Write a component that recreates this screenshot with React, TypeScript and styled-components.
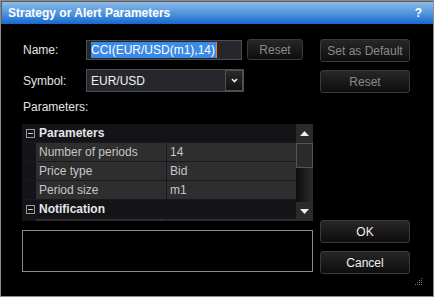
import styled, { createGlobalStyle } from "styled-components";

const GlobalStyle = createGlobalStyle`
  html, body {
    margin: 0;
    padding: 0;
    background: #000;
  }
  body {
    font-family: "Liberation Sans", Arial, sans-serif;
    font-size: 12px;
  }
`;

const Window = styled.div`
  position: relative;
  width: 434px;
  height: 297px;
  box-sizing: border-box;
  border: 1px solid #8c8c8c;
  background: #000;
  display: flex;
  flex-direction: column;
`;

const TitleBar = styled.div`
  height: 23px;
  box-sizing: border-box;
  border-top: 1px solid #5a5a5a;
  border-left: 1px solid #5a5a5a;
  background: linear-gradient(#8dbce9, #4c92dc 55%, #1468cf);
  display: flex;
  align-items: center;
  justify-content: space-between;
  padding: 0 11px 0 6px;
  color: #fff;
  font-weight: bold;
  font-size: 12px;
`;

const Body = styled.div`
  flex: 1;
  display: flex;
  gap: 7px;
  padding: 15px 22px 22px 21px;
`;

const LeftColumn = styled.div`
  width: 291px;
  display: flex;
  flex-direction: column;
`;

const RightColumn = styled.div`
  width: 90px;
  display: flex;
  flex-direction: column;
  gap: 8px;
`;

const Spacer = styled.div`
  flex: 1;
`;

const FieldRow = styled.div<{ $top: number; $height: number }>`
  display: flex;
  align-items: center;
  height: ${(p) => p.$height}px;
  margin-top: ${(p) => p.$top}px;
`;

const Label = styled.div`
  width: 64px;
  box-sizing: border-box;
  padding-left: 1px;
  color: #e4e4e4;
  line-height: 14px;
`;

const TextInput = styled.div`
  width: 156px;
  height: 20px;
  box-sizing: border-box;
  border: 1px solid #4c4d52;
  background: #26272c;
  display: flex;
  align-items: center;
  padding-left: 4px;
`;

const Selected = styled.span`
  background: #3a8ae6;
  color: #fff;
  line-height: 16px;
  padding-right: 1px;
  border-right: 1px solid #f08020;
`;

const Select = styled.div`
  width: 158px;
  height: 23px;
  box-sizing: border-box;
  border: 1px solid #4c4d52;
  background: #26272c;
  display: flex;
  align-items: center;
  color: #f2f2f2;
`;

const SelectValue = styled.div`
  flex: 1;
  padding-left: 4px;
`;

const DropButton = styled.div`
  width: 18px;
  height: 21px;
  box-sizing: border-box;
  border: 1px solid #505050;
  background: linear-gradient(#2a2a2a, #111);
  display: flex;
  align-items: center;
  justify-content: center;
`;

const Button = styled.div<{ $dim?: boolean; $width?: number; $height?: number }>`
  width: ${(p) => (p.$width ? `${p.$width}px` : "100%")};
  height: ${(p) => p.$height ?? 23}px;
  box-sizing: border-box;
  border: 1px solid #3a3a3a;
  border-radius: 3px;
  background: linear-gradient(#272727, #0d0d0d);
  color: ${(p) => (p.$dim ? "#8a8a8a" : "#f2f2f2")};
  display: flex;
  align-items: center;
  justify-content: center;
  flex-shrink: 0;
`;

const SmallButton = styled(Button)`
  margin-left: 5px;
`;

const SectionLabel = styled.div`
  margin-top: 8px;
  padding-left: 1px;
  line-height: 14px;
  color: #e4e4e4;
`;

const Grid = styled.div`
  margin-top: 10px;
  height: 97px;
  display: flex;
  overflow: hidden;
  background: #131318;
`;

const GridRows = styled.div`
  flex: 1;
  display: flex;
  flex-direction: column;
`;

const Row = styled.div<{ $header?: boolean }>`
  height: 19px;
  flex-shrink: 0;
  box-sizing: border-box;
  border-bottom: 1px solid #1a1a1c;
  display: flex;
  background: #131318;
  color: ${(p) => (p.$header ? "#e6e6e6" : "#c6c6c6")};
  font-weight: ${(p) => (p.$header ? "bold" : "normal")};
`;

const Gutter = styled.div`
  width: 14px;
  flex-shrink: 0;
  display: flex;
  align-items: center;
  justify-content: center;
`;

const Toggle = styled.div`
  width: 9px;
  height: 9px;
  box-sizing: border-box;
  border: 1px solid #9a9a9a;
  position: relative;
  margin-left: 3px;
  &::after {
    content: "";
    position: absolute;
    left: 1px;
    right: 1px;
    top: 3px;
    height: 1px;
    background: #d0d0d0;
  }
`;

const HeaderText = styled.div`
  padding-left: 3px;
  line-height: 18px;
`;

const NameCell = styled.div`
  width: 131px;
  box-sizing: border-box;
  border-right: 1px solid #1a1a1c;
  background: #2e2e2f;
  padding-left: 3px;
  line-height: 18px;
`;

const ValueCell = styled.div`
  flex: 1;
  background: #2e2e2f;
  padding-left: 3px;
  line-height: 18px;
`;

const ScrollBar = styled.div`
  width: 17px;
  display: flex;
  flex-direction: column;
  background: #1e1e1e;
`;

const ScrollArrow = styled.div`
  height: 19px;
  flex-shrink: 0;
  background: #2a2a2b;
  display: flex;
  align-items: center;
  justify-content: center;
`;

const Thumb = styled.div`
  height: 25px;
  flex-shrink: 0;
  box-sizing: border-box;
  border: 1px solid #555;
  background: #2b2b2c;
`;

const Track = styled.div`
  flex: 1;
  background: linear-gradient(90deg, #0c0c0c, #2c2c2c);
`;

const DescriptionBox = styled.div`
  margin-top: 9px;
  height: 42px;
  box-sizing: border-box;
  border: 1px solid #8a8a8a;
  background: #000;
`;

const Grip = styled.svg`
  position: absolute;
  right: 11px;
  bottom: 11px;
`;

type Prop = { name: string; value: string };

const parameters: Prop[] = [
  { name: "Number of periods", value: "14" },
  { name: "Price type", value: "Bid" },
  { name: "Period size", value: "m1" },
];

const GroupHeader = ({ title }: { title: string }) => (
  <Row $header>
    <Gutter>
      <Toggle />
    </Gutter>
    <HeaderText>{title}</HeaderText>
  </Row>
);

const Triangle = ({ up }: { up: boolean }) => (
  <svg width="9" height="5" viewBox="0 0 9 5">
    <polygon points={up ? "4.5,0 9,5 0,5" : "0,0 9,0 4.5,5"} fill="#eee" />
  </svg>
);

export default function App() {
  return (
    <>
      <GlobalStyle />
      <Window>
        <TitleBar>
          <span>Strategy or Alert Parameters</span>
          <span>?</span>
        </TitleBar>
        <Body>
          <LeftColumn>
            <FieldRow $top={0} $height={21}>
              <Label>Name:</Label>
              <TextInput>
                <Selected>CCI(EUR/USD(m1),14)</Selected>
              </TextInput>
              <SmallButton $dim $width={56} $height={21}>
                Reset
              </SmallButton>
            </FieldRow>
            <FieldRow $top={9} $height={23}>
              <Label>Symbol:</Label>
              <Select>
                <SelectValue>EUR/USD</SelectValue>
                <DropButton>
                  <svg width="7" height="5" viewBox="0 0 7 5">
                    <polyline
                      points="1,1 3.5,3.5 6,1"
                      fill="none"
                      stroke="#eee"
                      strokeWidth="1.6"
                    />
                  </svg>
                </DropButton>
              </Select>
            </FieldRow>
            <SectionLabel>Parameters:</SectionLabel>
            <Grid>
              <GridRows>
                <GroupHeader title="Parameters" />
                {parameters.map((p) => (
                  <Row key={p.name}>
                    <Gutter />
                    <NameCell>{p.name}</NameCell>
                    <ValueCell>{p.value}</ValueCell>
                  </Row>
                ))}
                <GroupHeader title="Notification" />
                <Row>
                  <Gutter />
                  <NameCell />
                  <ValueCell />
                </Row>
              </GridRows>
              <ScrollBar>
                <ScrollArrow>
                  <Triangle up />
                </ScrollArrow>
                <Thumb />
                <Track />
                <ScrollArrow>
                  <Triangle up={false} />
                </ScrollArrow>
              </ScrollBar>
            </Grid>
            <DescriptionBox />
          </LeftColumn>
          <RightColumn>
            <Button $dim>Set as Default</Button>
            <Button $dim>Reset</Button>
            <Spacer />
            <Button>OK</Button>
            <Button>Cancel</Button>
          </RightColumn>
        </Body>
        <Grip width="7" height="7" viewBox="0 0 7 7">
          {[
            [6, 0],
            [6, 2],
            [4, 2],
            [6, 4],
            [4, 4],
            [2, 4],
            [6, 6],
            [4, 6],
            [2, 6],
            [0, 6],
          ].map(([x, y]) => (
            <rect key={`${x}-${y}`} x={x} y={y} width="1" height="1" fill="#777" />
          ))}
        </Grip>
      </Window>
    </>
  );
}
